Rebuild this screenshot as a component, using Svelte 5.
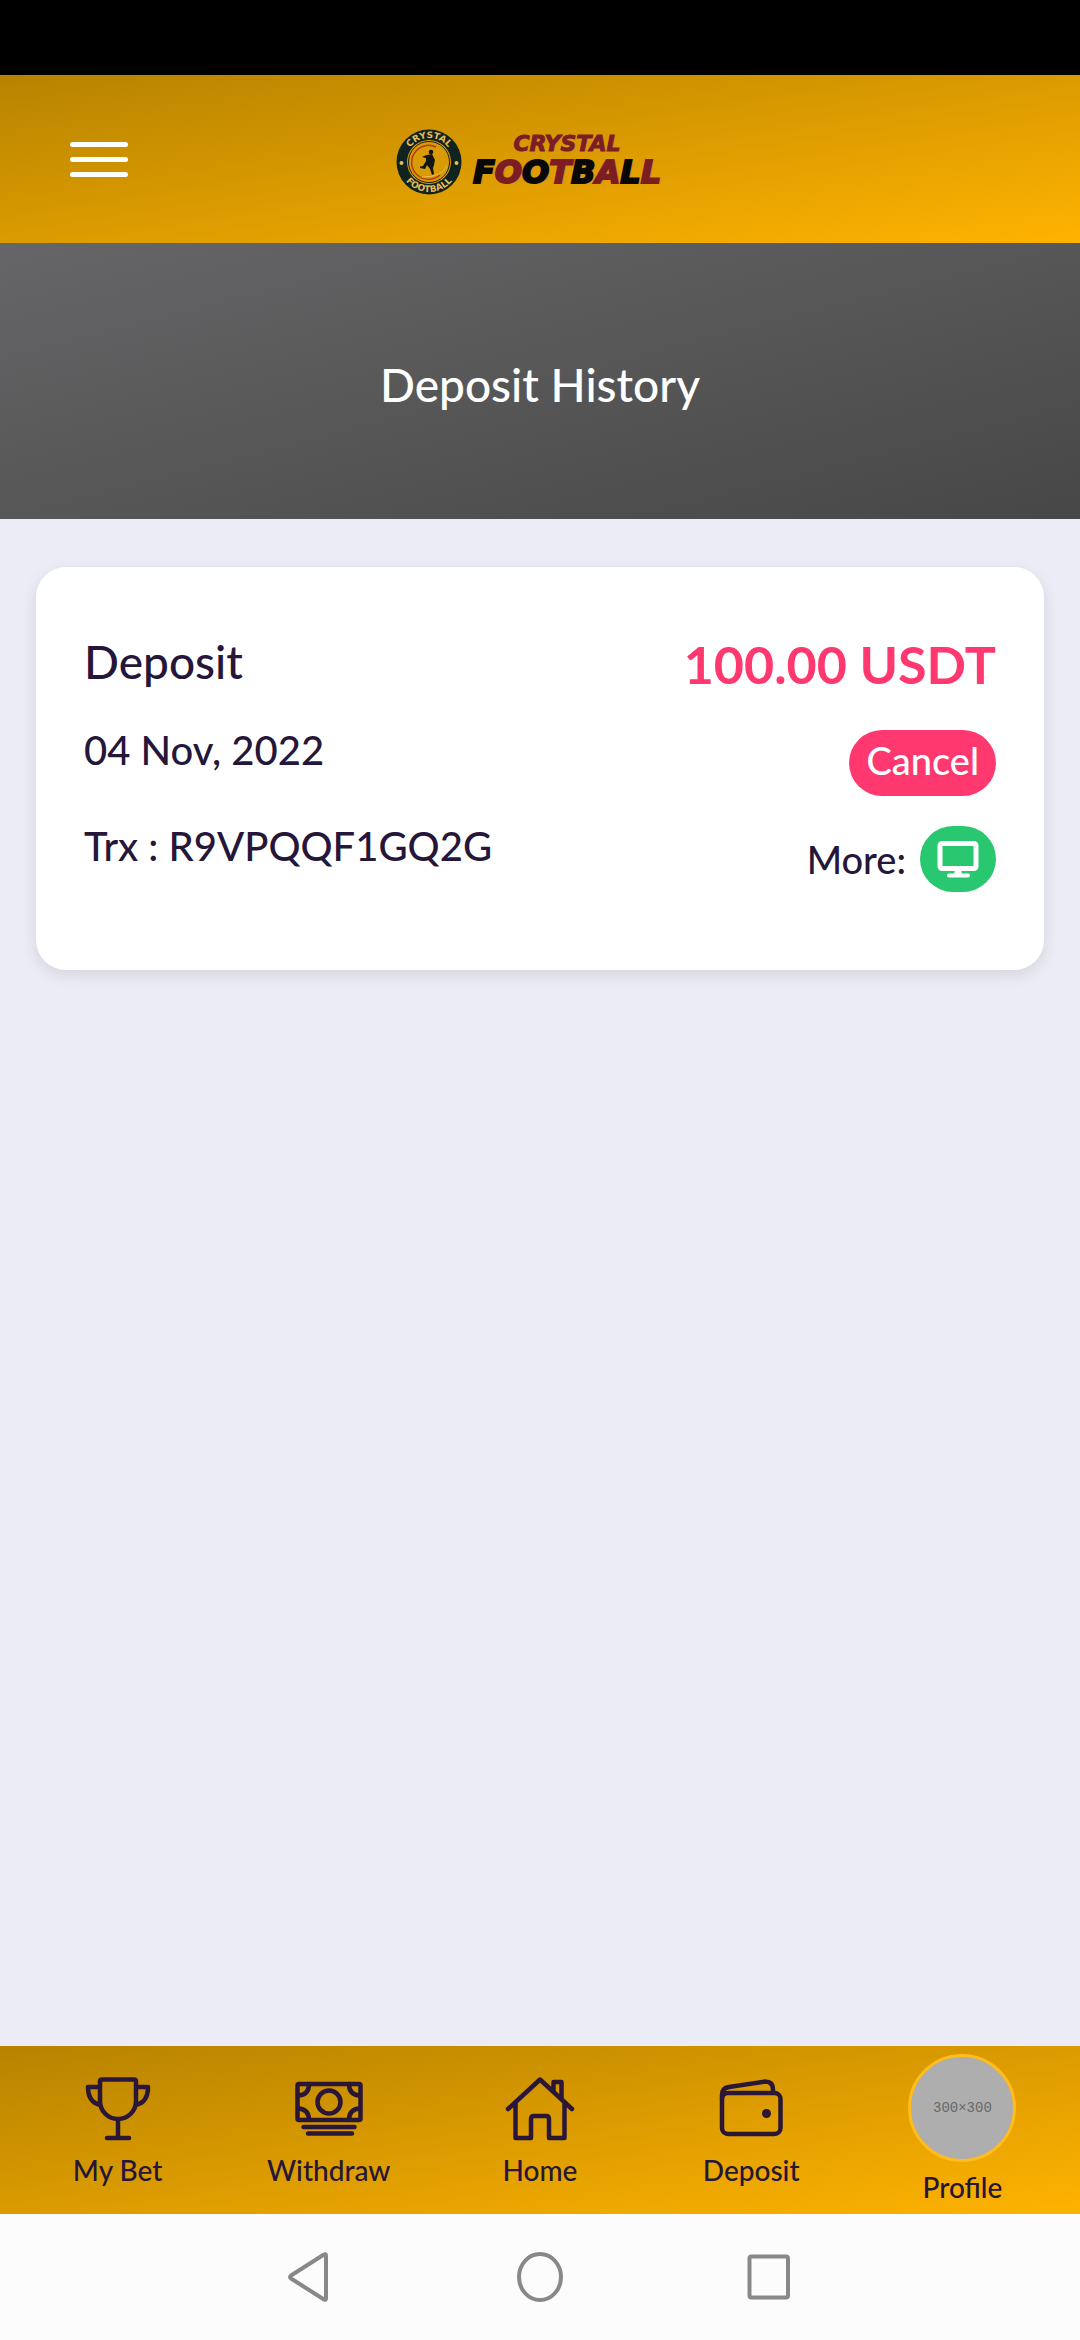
<script>
  const deposit = {
    amount: '100.00 USDT',
    date: '04 Nov, 2022',
    trx: 'R9VPQQF1GQ2G',
    status: 'Cancel'
  };
  const letters = ['F', 'O', 'O', 'T', 'B', 'A', 'L', 'L'];
  const dark = [0, 2, 4, 6];
</script>

<div class="page">
  <div class="status-bar"></div>

  <header class="topbar">
    <button class="menu" aria-label="Open menu"><i></i><i></i><i></i></button>
    <a class="brand" href="#home" aria-label="Crystal Football">
      <svg class="seal" viewBox="0 0 66 66" aria-hidden="true">
        <defs>
          <path id="arcTop" d="M9 33a24 24 0 0 1 48 0" />
          <path id="arcBottom" d="M3 33a30 30 0 0 0 60 0" />
        </defs>
        <circle cx="33" cy="33" r="32.500" fill="#10231f" />
        <circle cx="33" cy="33" r="22" fill="#d99b05" />
        <circle cx="33" cy="33" r="20.500" fill="none" stroke="#1b2119" stroke-width="1" />
        <path d="M44 46A17 17 0 1 1 40 18" fill="none" stroke="#b23a10" stroke-width="1.500" />
        <path d="M26 48q20 0 25-11" fill="none" stroke="#e9b947" stroke-width="1" />
        <circle cx="35" cy="23" r="2.300" fill="#121512" />
        <path d="M31 26l5-1 3 6-1 5-1 3 1 6-2 1-2-6-3-4-2 4-5-1 0-1.500 3-.5 3-5 0-3-4-1 2-1z" fill="#121512" />
        <circle cx="5.500" cy="34" r="2" fill="#e5bd59" />
        <circle cx="60.500" cy="34" r="2" fill="#e5bd59" />
        <text class="seal-text"><textPath href="#arcTop" startOffset="50%" text-anchor="middle">CRYSTAL</textPath></text>
        <text class="seal-text"><textPath href="#arcBottom" startOffset="50%" text-anchor="middle">FOOTBALL</textPath></text>
      </svg>
      <span class="wordmark">
        <span class="crystal">CRYSTAL</span>
        <span class="football">{#each letters as l, i}<b class:dark={dark.includes(i)}>{l}</b>{/each}</span>
      </span>
    </a>
  </header>

  <section class="hero"><h1>Deposit History</h1></section>

  <main>
    <article class="card">
      <div class="left">
        <h2>Deposit</h2>
        <p class="date">{deposit.date}</p>
        <p class="trx">Trx : {deposit.trx}</p>
      </div>
      <div class="right">
        <strong>{deposit.amount}</strong>
        <span class="badge">{deposit.status}</span>
        <div class="more">
          <span>More:</span>
          <button class="details" aria-label="View details">
            <svg viewBox="0 0 42 38" aria-hidden="true">
              <rect x="3" y="3.500" width="36" height="25" rx="2" fill="none" stroke="#fff" stroke-width="5" />
              <path d="M18 30h6l1 4h-8z" fill="#fff" />
              <path d="M12 35.500h19" stroke="#fff" stroke-width="4" stroke-linecap="round" />
            </svg>
          </button>
        </div>
      </div>
    </article>
  </main>

  <nav class="tabs" aria-label="Main">
    <a href="#bets">
      <svg viewBox="0 0 72 72" aria-hidden="true">
        <path d="M20 7.500H52q2 0 2 2V29a18 18 0 0 1-36 0V9.500q0-2 2-2zM18 15H6q0 15 12 18M54 15H66q0 15-12 18M36 47V66M25 66H47" />
      </svg>
      <span>My Bet</span>
    </a>
    <a href="#withdraw">
      <svg viewBox="0 0 72 72" aria-hidden="true">
        <rect x="4.500" y="12" width="63" height="36" rx="1.500" />
        <circle cx="36" cy="30" r="11.500" />
        <path d="M16 12q0 11-11 11.500M56 12q0 11 11 11.500M16 48q0-11-11-11.500M56 48q0-11 11-11.500M10.500 55h51M15 61.500h44" />
      </svg>
      <span>Withdraw</span>
    </a>
    <a href="#home">
      <svg viewBox="0 0 72 72" aria-hidden="true">
        <path d="M4 37L36 7.500L68 37M11.500 31V66H27V47q0-3 3-3H42q3 0 3 3V66H60.500V31M49.500 19V10H57.500V27" />
      </svg>
      <span>Home</span>
    </a>
    <a href="#deposit">
      <svg viewBox="0 0 72 72" aria-hidden="true">
        <rect x="7" y="21" width="58.500" height="41" rx="6" />
        <path d="M7 27V23q0-7 7-8L50 9.500q8 0 8 8V21" />
        <circle class="dot" cx="51.500" cy="41.500" r="4.500" />
      </svg>
      <span>Deposit</span>
    </a>
    <a href="#profile">
      <span class="avatar">300×300</span>
      <span>Profile</span>
    </a>
  </nav>

  <footer class="system">
    <button aria-label="Back"><svg viewBox="0 0 72 72"><path d="M17 34.500L50 13.500q2-1 2 1v43q0 2-2 1L17 37.500q-2-1.500 0-3z" /></svg></button>
    <button aria-label="Home screen"><svg viewBox="0 0 72 72"><ellipse cx="36" cy="36" rx="21" ry="23" /></svg></button>
    <button aria-label="Recent apps"><svg viewBox="0 0 72 72"><rect x="15.500" y="15.500" width="38.500" height="41" rx="2" /></svg></button>
  </footer>
</div>

<style>
  :global(body) { margin: 0; background: #ececf6; }
  .page {
    min-height: 100vh;
    display: flex;
    flex-direction: column;
    color: #25163a;
    font-family: Lato, "Liberation Sans", sans-serif;
    font-weight: 500;
  }
  button { border: 0; padding: 0; background: none; font: inherit; color: inherit; }
  a { color: inherit; text-decoration: none; }
  h1, h2, p { margin: 0; font-weight: 500; }
  .status-bar { height: 75px; background: #000; }

  .topbar, .tabs { background: linear-gradient(to bottom right, #b78300, #ffb300); }
  .topbar {
    height: 168px;
    display: grid;
    grid-template-columns: 1fr auto 1fr;
    align-items: center;
    padding: 0 70px;
  }
  .menu { width: 58px; display: grid; gap: 10px; }
  .menu i { height: 5px; border-radius: 3px; background: #fff; }
  .brand { display: flex; align-items: center; gap: 4px; padding: 6px 16px 0 0; }
  .seal { width: 66px; height: 66px; overflow: visible; }
  .seal-text { font: bold 9px "DejaVu Sans", sans-serif; fill: #e5bd59; }
  .wordmark {
    display: flex;
    flex-direction: column;
    align-items: center;
    width: 202px;
    padding-bottom: 2px;
    font-family: "DejaVu Sans", sans-serif;
    font-weight: bold;
    font-style: italic;
    color: #7c1d22;
  }
  .crystal { font-size: 22px; line-height: 22px; -webkit-text-stroke: 1px #7c1d22; text-shadow: 1px 1px 0 #d98a4a; }
  .football { font-size: 32px; line-height: 34px; }
  .football b { -webkit-text-stroke: 2px #7c1d22; text-shadow: 2px 1px 0 #d98a4a; }
  .football .dark { color: #080808; -webkit-text-stroke-color: #080808; }

  .hero {
    height: 276px;
    display: grid;
    place-items: center;
    background: linear-gradient(to bottom right, #666668, #474747);
    color: #fff;
  }
  h1 { font-size: 46px; line-height: 64px; padding-top: 8px; }

  main { flex: 1; padding: 48px 36px; }
  .card {
    display: flex;
    justify-content: space-between;
    padding: 61px 48px 78px;
    border-radius: 30px;
    background: #fff;
    box-shadow: 0 5px 15px rgba(0, 0, 0, 0.1);
  }
  h2 { font-size: 46px; line-height: 68px; }
  .date, .trx { font-size: 40px; line-height: 56px; }
  .date { margin-top: 26px; }
  .trx { margin-top: 40px; }
  .right { display: flex; flex-direction: column; align-items: flex-end; gap: 30px; }
  strong { font-size: 52px; line-height: 72px; font-weight: 700; color: #ff396f; }
  .badge {
    box-sizing: border-box;
    height: 66px;
    padding: 0 17px;
    border-radius: 33px;
    background: #ff396f;
    color: #fff;
    font-size: 38px;
    line-height: 60px;
  }
  .more { display: flex; align-items: center; gap: 14px; font-size: 38px; line-height: 60px; }
  .details {
    width: 76px;
    height: 66px;
    border-radius: 33px;
    background: #29c76f;
    display: grid;
    place-items: center;
  }
  .details svg { width: 42px; height: 38px; }

  .tabs {
    height: 168px;
    box-sizing: border-box;
    padding: 8px 12px 0;
    display: grid;
    grid-template-columns: repeat(5, 1fr);
    font-size: 28px;
    line-height: 36px;
  }
  .tabs a { display: flex; flex-direction: column; align-items: center; }
  .tabs svg {
    width: 72px;
    height: 72px;
    margin: 18px 0 8px;
    fill: none;
    stroke: #2a1636;
    stroke-width: 4.500;
    stroke-linecap: round;
    stroke-linejoin: round;
  }
  .tabs .dot { fill: #2a1636; stroke: none; }
  .avatar {
    box-sizing: border-box;
    width: 108px;
    height: 108px;
    margin-bottom: 7px;
    border: 3px solid #ffbc1c;
    border-radius: 50%;
    background: #aeaeae;
    display: grid;
    place-items: center;
    color: #686868;
    font: 14px "Liberation Mono", monospace;
  }

  .system {
    height: 126px;
    display: flex;
    align-items: center;
    justify-content: center;
    gap: 158px;
    background: #fcfcfc;
  }
  .system button, .system svg { display: block; width: 72px; height: 72px; }
  .system svg { fill: none; stroke: #888; stroke-width: 4; stroke-linejoin: round; }
</style>
